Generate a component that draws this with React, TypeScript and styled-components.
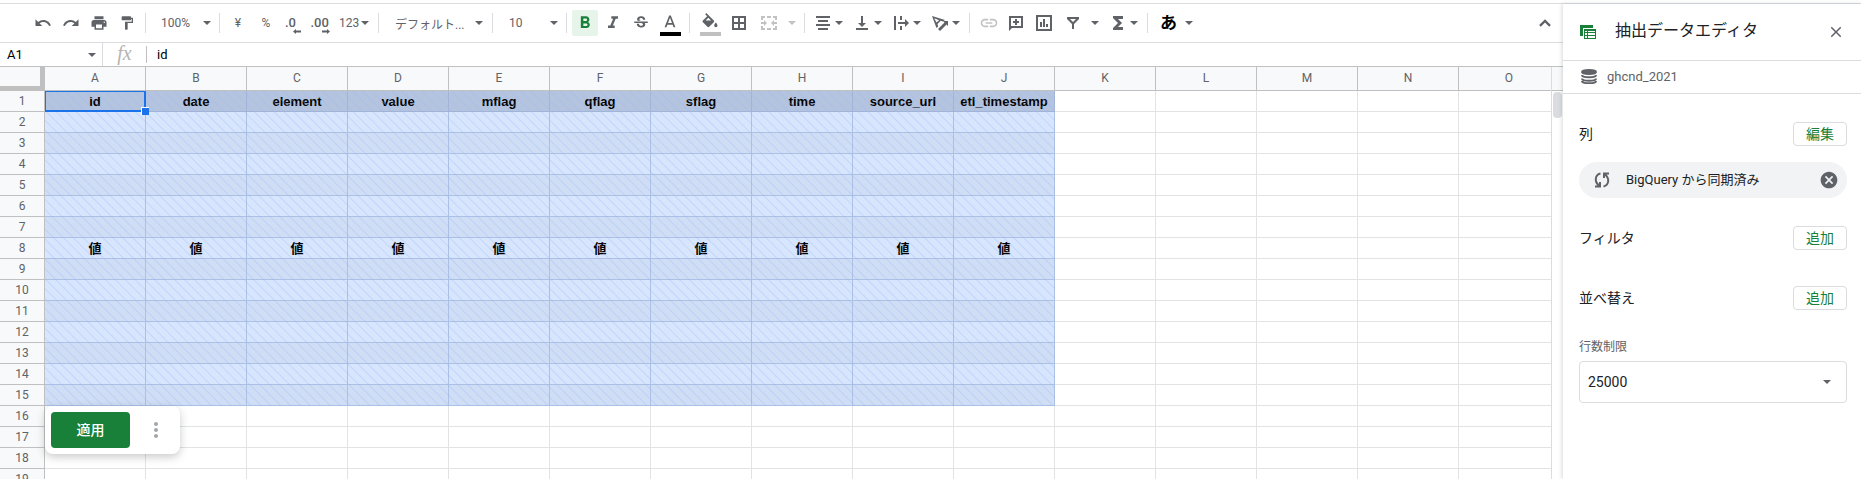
import React from 'react';
import styled, { createGlobalStyle, css } from 'styled-components';

const SANS = `Roboto, 'Noto Sans CJK JP', sans-serif`;
const LINE = '#dadce0';
const GRID = '#e2e3e3';
const HEAD_LINE = '#c0c0c0';
const INK = '#5f6368';
const GREEN = '#188038';

const GlobalStyle = createGlobalStyle`
  *, *::before, *::after { box-sizing: border-box; }
  body { margin: 0; background: #fff; color: #202124; font-family: ${SANS}; font-size: 13px; }
  button, input, select { font-family: inherit; }
`;

const Page = styled.div`
  display: flex;
  flex-direction: column;
  height: 100vh;
  padding-top: 3px;
  overflow: hidden;
`;
const Body = styled.div`
  display: flex;
  flex: 1;
  min-height: 0;
  border-top: 1px solid ${LINE};
`;
const Main = styled.main`
  display: flex;
  flex-direction: column;
  flex: 1;
  min-width: 0;
`;

/* ---------- toolbar ---------- */
const Toolbar = styled.div`
  display: flex;
  align-items: center;
  height: 39px;
  padding: 0 8px 0 29px;
  border-bottom: 1px solid ${LINE};
`;
const IconButton = styled.button<{ $w?: number; $on?: boolean; $dim?: boolean; $ml?: number }>`
  display: flex;
  align-items: center;
  justify-content: center;
  flex: none;
  width: ${p => p.$w ?? 26}px;
  height: 26px;
  margin: 0 0 0 ${p => p.$ml ?? 0}px;
  padding: 0;
  border: 0;
  border-radius: 2px;
  background: ${p => (p.$on ? '#e6f4ea' : 'transparent')};
  color: ${p => (p.$on ? GREEN : p.$dim ? '#c1c2c4' : INK)};
  font-size: 12px;
  svg { display: block; }
`;
const MenuButton = styled(IconButton)`
  justify-content: space-between;
`;
const MoreButton = styled(IconButton)`
  color: #a3a6aa;
`;
const Divider = styled.span<{ $ml?: number; $mr?: number }>`
  flex: none;
  width: 1px;
  height: 20px;
  margin: 0 ${p => p.$mr ?? 6}px 0 ${p => p.$ml ?? 6}px;
  background: ${LINE};
`;
const Spacer = styled.span`
  flex: 1;
`;
const Caret = styled.span`
  flex: none;
  border: 4px solid transparent;
  border-top-color: currentColor;
  border-bottom: 0;
`;

type IconProps = { d: string; size?: number; box?: number };
const Icon = ({ d, size = 18, box = 24 }: IconProps) => (
  <svg width={size} height={size} viewBox={`0 0 ${box} ${box}`} fill="currentColor" fillRule="evenodd" aria-hidden="true">
    <path d={d} />
  </svg>
);

const P = {
  undo: 'M12.5 8c-2.65 0-5.05.99-6.9 2.6L2 7v9h9l-3.62-3.62c1.39-1.16 3.16-1.88 5.12-1.88 3.54 0 6.55 2.31 7.6 5.5l2.37-.78C21.08 11.03 17.15 8 12.5 8z',
  redo: 'M18.4 10.6C16.55 8.99 14.15 8 11.5 8c-4.65 0-8.58 3.03-9.96 7.22L3.9 16c1.05-3.19 4.05-5.5 7.6-5.5 1.95 0 3.73.72 5.12 1.88L13 16h9V7l-3.6 3.6z',
  print: 'M19 8H5c-1.66 0-3 1.34-3 3v6h4v4h12v-4h4v-6c0-1.66-1.34-3-3-3zm-3 11H8v-5h8v5zm3-7c-.55 0-1-.45-1-1s.45-1 1-1 1 .45 1 1-.45 1-1 1zm-1-9H6v4h12V3z',
  paint: 'M18 4V3c0-.55-.45-1-1-1H5c-.55 0-1 .45-1 1v4c0 .55.45 1 1 1h12c.55 0 1-.45 1-1V6h1v4H9v11c0 .55.45 1 1 1h2c.55 0 1-.45 1-1v-9h8V4h-3z',
  bold: 'M15.6 10.79c.97-.67 1.65-1.77 1.65-2.79 0-2.26-1.75-4-4-4H7v14h7.04c2.09 0 3.71-1.7 3.71-3.79 0-1.52-.86-2.82-2.15-3.42zM10 6.5h3c.83 0 1.5.67 1.5 1.5s-.67 1.5-1.5 1.5h-3v-3zm3.5 9H10v-3h3.5c.83 0 1.5.67 1.5 1.5s-.67 1.5-1.5 1.5z',
  italic: 'M10 4v3h2.21l-3.42 8H6v3h8v-3h-2.21l3.42-8H18V4z',
  strike: 'M7.24 8.75c-.26-.48-.39-1.03-.39-1.67 0-.61.13-1.16.4-1.67.26-.5.63-.93 1.11-1.29.48-.35 1.05-.63 1.7-.83.66-.19 1.39-.29 2.18-.29.81 0 1.54.11 2.21.34.66.22 1.23.54 1.69.94.47.4.83.88 1.08 1.43s.38 1.15.38 1.81h-3.01c0-.31-.05-.59-.15-.85-.09-.27-.24-.49-.44-.68-.2-.19-.45-.33-.75-.44-.3-.1-.66-.16-1.06-.16-.39 0-.74.04-1.03.13s-.53.21-.72.36c-.19.16-.34.34-.44.55-.1.21-.15.43-.15.66 0 .48.25.88.74 1.21.38.25.77.48 1.41.7H7.39c-.05-.08-.11-.17-.15-.25zM21 12v-2H3v2h9.62c.18.07.4.14.55.2.37.17.66.34.87.51s.35.36.43.57c.07.2.11.43.11.69 0 .23-.05.45-.14.66-.09.2-.23.38-.42.53-.19.15-.42.26-.71.35-.29.08-.63.13-1.01.13-.43 0-.83-.04-1.18-.13s-.66-.23-.91-.42c-.25-.19-.45-.44-.59-.75s-.25-.76-.25-1.21H6.4c0 .55.08 1.13.24 1.58s.37.85.65 1.21c.28.35.6.66.98.92.37.26.78.48 1.22.65.44.17.9.3 1.38.39.48.08.96.13 1.44.13.8 0 1.53-.09 2.18-.28s1.21-.45 1.67-.79c.46-.34.82-.77 1.07-1.27s.38-1.07.38-1.71c0-.6-.1-1.14-.31-1.61-.05-.11-.11-.23-.17-.33H21V12z',
  textA: 'M11 3L5.5 17h2.25l1.12-3h6.25l1.12 3h2.25L13 3h-2zm-1.38 9L12 5.67 14.38 12H9.62z',
  fill: 'M16.56 8.94L7.62 0 6.21 1.41l2.38 2.38-5.15 5.15c-.59.59-.59 1.54 0 2.12l5.5 5.5c.29.29.68.44 1.06.44s.77-.15 1.06-.44l5.5-5.5c.59-.58.59-1.53 0-2.12zM6.700 9L10 5.700 13.300 9H6.700zM19 11.5s-2 2.17-2 3.5c0 1.1.9 2 2 2s2-.9 2-2c0-1.33-2-3.5-2-3.5z',
  // The icons below are drawn on an 18 unit grid, one unit to a pixel.
  borders: 'M2 2h14v14H2zM4 4v4h4V4zm6 0v4h4V4zm-6 6v4h4v-4zm6 0v4h4v-4z',
  merge: 'M1 2h4v2H3v2H1zM7 2h4v2H7zM13 2h4v4h-2V4h-2zM1 12h2v2h2v2H1zM7 14h4v2H7zM15 12h2v4h-4v-2h2zM1 8h3V6l3 3-3 3v-2H1zM17 8h-3V6l-3 3 3 3v-2h3z',
  center: 'M2 2h14v2H2zM4 6h10v2H4zM2 10h14v2H2zM4 14h10v2H4z',
  bottom: 'M8 2h2v7h3l-4 4-4-4h3zM3 14h12v2H3z',
  overflow: 'M2 2h2v14H2zM8 2h2v4H8zM8 12h2v4H8zM6 8h7V5l4 4-4 4v-3H6z',
  rotate: 'M1 2l13 4-2 1.500-2.300-.7L6.500 10l.7 2.500L5.500 14zM3.200 4.200l2.300 4.400L8.100 6.200zM7 15l6.500-6.500L12 7h5v5l-1.500-1.500L9 17z',
  link: 'M3.900 12c0-1.710 1.390-3.100 3.100-3.100h4V7H7c-2.760 0-5 2.240-5 5s2.240 5 5 5h4v-1.900H7c-1.710 0-3.100-1.390-3.100-3.100zM8 13h8v-2H8v2zm9-6h-4v1.900h4c1.710 0 3.100 1.390 3.100 3.100s-1.390 3.100-3.100 3.100h-4V17h4c2.760 0 5-2.240 5-5s-2.240-5-5-5z',
  comment: 'M2 2h14v12H5l-3 3zM4 4v8h10V4zM8 5h2v2h2v2h-2v2H8V9H6V7h2z',
  chart: 'M1 1h16v16H1zM3 3v12h12V3zM5 8h2v5H5zM8 5h2v8H8zM11 10h2v3h-2z',
  filter: 'M3 3h12v2l-5 5v5H8v-5L3 5zM6 5l3 3 3-3z',
  sigma: 'M4 2h10v3H9l4 4-4 4h5v3H4v-2l5-5-5-5z',
  up: 'M12 7.500l-7 7 1.900 1.900 5.100-5.100 5.100 5.100 1.900-1.900z',
  close: 'M19 6.410L17.590 5 12 10.590 6.410 5 5 6.410 10.590 12 5 17.590 6.410 19 12 13.410 17.590 19 19 17.590 13.410 12z',
  cancel: 'M12 2C6.470 2 2 6.470 2 12s4.470 10 10 10 10-4.470 10-10S17.530 2 12 2zm5 13.590L15.590 17 12 13.410 8.410 17 7 15.590 10.590 12 7 8.410 8.410 7 12 10.590 15.590 7 17 8.410 13.410 12 17 15.590z',
  more: 'M12 8c1.100 0 2-.9 2-2s-.9-2-2-2-2 .9-2 2 .9 2 2 2zm0 2c-1.100 0-2 .9-2 2s.9 2 2 2 2-.9 2-2-.9-2-2-2zm0 6c-1.100 0-2 .9-2 2s.9 2 2 2 2-.9 2-2-.9-2-2-2z',
};

const Swatch = styled.span<{ $c: string }>`
  display: flex;
  flex-direction: column;
  align-items: center;
  padding-top: 3px;
  &::after {
    content: '';
    width: 21px;
    height: 4px;
    margin-top: -1px;
    background: ${p => p.$c};
  }
`;
const Decimal = styled.span<{ $w: number }>`
  display: flex;
  flex-direction: column;
  width: ${p => p.$w}px;
  padding-top: 4px;
  font-size: 13px;
  font-weight: 500;
  line-height: 13px;
  text-align: left;
  svg { align-self: flex-end; }
`;
const Kana = styled.span`
  color: #000;
  font-size: 17px;
  font-weight: 700;
  line-height: 20px;
`;
const DecimalArrow = ({ right }: { right?: boolean }) => (
  <svg width="8" height="5" viewBox="0 0 8 5" fill="currentColor" aria-hidden="true">
    <path d={right ? 'M0 1.500h5V0l3 2.500L5 5V3.500H0z' : 'M8 1.500H3V0L0 2.500 3 5V3.500h5z'} />
  </svg>
);

/* ---------- formula bar ---------- */
const FormulaBar = styled.div`
  display: flex;
  align-items: center;
  height: 24px;
  border-bottom: 1px solid ${HEAD_LINE};
`;
const NameBox = styled.div`
  display: flex;
  align-items: center;
  width: 103px;
  height: 100%;
  padding-right: 6px;
  border-right: 1px solid ${LINE};
  color: ${INK};
`;
const PlainInput = styled.input`
  flex: 1;
  min-width: 0;
  padding: 0 0 0 7px;
  border: 0;
  outline: 0;
  background: transparent;
  color: #000;
  font-size: 13px;
`;
const Fx = styled.span`
  width: 43px;
  padding-bottom: 3px;
  color: #b4b4b4;
  font-family: 'Liberation Serif', serif;
  font-size: 20px;
  font-style: italic;
  line-height: 20px;
  text-align: center;
`;
const FormulaField = styled.label`
  display: flex;
  flex: 1;
  height: 17px;
  padding-left: 3px;
  border-left: 1px solid ${HEAD_LINE};
`;

/* ---------- sheet ---------- */
const SheetRow = styled.div`
  display: flex;
  flex: 1;
  min-height: 0;
`;
const Viewport = styled.div`
  position: relative;
  flex: 1;
  min-width: 0;
  overflow: hidden;
`;
const Table = styled.table`
  width: 1560px;
  table-layout: fixed;
  border-collapse: separate;
  border-spacing: 0;
`;
const Col = styled.col<{ $w: number }>`
  width: ${p => p.$w}px;
`;
const Corner = styled.td`
  height: 24px;
  padding: 0;
  border: solid ${HEAD_LINE};
  border-width: 0 5px 5px 0;
  background: #f8f9fa;
`;
const ColHead = styled.th`
  height: 24px;
  padding: 0;
  border: solid ${HEAD_LINE};
  border-width: 0 1px 1px 0;
  background: #f8f9fa;
  color: ${INK};
  font-size: 12px;
  font-weight: 400;
  line-height: 15px;
`;
const RowHead = styled(ColHead)`
  height: 21px;
`;
type Tone = 'head' | 'light' | 'dark';
const tones: Record<Tone, [string, string]> = {
  head: ['#b4c4df', '#a2b4d6'],
  light: ['#d7e5fd', '#abc0e3'],
  dark: ['#cfdef5', '#abc0e3'],
};
const Cell = styled.td<{ $tone?: Tone }>`
  height: 21px;
  padding: 1px 0 0;
  border: solid ${GRID};
  border-width: 0 1px 1px 0;
  font-family: 'Liberation Sans', 'Noto Sans CJK JP', sans-serif;
  font-size: 13px;
  font-weight: 700;
  line-height: 18px;
  text-align: center;
  white-space: nowrap;
  color: #000;
  ${p => p.$tone && css`
    background: ${tones[p.$tone][0]};
    border-color: ${tones[p.$tone][1]};
  `}
`;
const Hatch = styled.div`
  position: absolute;
  top: 24px;
  left: 45px;
  width: 1010px;
  height: 315px;
  background: repeating-linear-gradient(45deg, transparent 0 5px, rgba(150, 180, 250, 0.32) 6px, transparent 7px);
  pointer-events: none;
`;
const Selection = styled.div`
  position: absolute;
  top: 24px;
  left: 45px;
  width: 101px;
  height: 21px;
  border: 2px solid #1a73e8;
  border-width: 1px 2px 2px 1px;
  &::after {
    content: '';
    position: absolute;
    right: -5px;
    bottom: -5px;
    width: 8px;
    height: 8px;
    border: solid #fff;
    border-width: 1px 0 0 1px;
    background: #1a73e8;
  }
`;
const ApplyCard = styled.div`
  position: absolute;
  top: 339px;
  left: 45px;
  display: flex;
  align-items: center;
  width: 135px;
  height: 48px;
  padding: 0 6px;
  border-radius: 8px;
  background: #fff;
  box-shadow: 0 3px 8px rgba(60, 64, 67, 0.28);
`;
const ApplyButton = styled.button`
  width: 79px;
  height: 36px;
  padding: 0 0 2px;
  border: 0;
  border-radius: 4px;
  background: ${GREEN};
  color: #fff;
  font-size: 14px;
  font-weight: 500;
`;
const Track = styled.div`
  flex: none;
  width: 12px;
  border-left: 1px solid ${LINE};
  background: #fff;
  &::before {
    content: '';
    display: block;
    height: 24px;
    border-bottom: 1px solid ${HEAD_LINE};
    background: #f8f9fa;
  }
  &::after {
    content: '';
    display: block;
    height: 26px;
    margin: 1px 1px 0;
    border-radius: 4px;
    background: ${LINE};
  }
`;

/* ---------- side panel ---------- */
const Panel = styled.aside`
  position: relative;
  flex: none;
  width: 298px;
  background: #fff;
  box-shadow: -1px 0 4px rgba(60, 64, 67, 0.2);
`;
const PanelHeader = styled.header`
  display: flex;
  align-items: center;
  height: 57px;
  padding: 0 16px 0 17px;
  border-bottom: 1px solid ${LINE};
`;
const PanelTitle = styled.h2`
  flex: 1;
  margin: 0;
  padding: 0 0 2px 19px;
  font-size: 16px;
  font-weight: 400;
  line-height: 24px;
`;
const Source = styled.div`
  display: flex;
  align-items: center;
  gap: 10px;
  height: 33px;
  padding: 0 0 2px 18px;
  border-bottom: 1px solid ${LINE};
  color: ${INK};
  font-size: 13px;
`;
const PanelBody = styled.div`
  padding: 28px 14px 0 16px;
`;
const Section = styled.div<{ $mb: number }>`
  display: flex;
  align-items: center;
  justify-content: space-between;
  height: 24px;
  margin-bottom: ${p => p.$mb}px;
  font-size: 14px;
  line-height: 20px;
`;
const SmallButton = styled.button`
  width: 54px;
  height: 24px;
  padding: 0;
  border: 1px solid ${LINE};
  border-radius: 4px;
  background: #fff;
  color: ${GREEN};
  font-size: 14px;
  line-height: 20px;
`;
const Chip = styled.div`
  display: flex;
  align-items: center;
  height: 36px;
  margin-bottom: 28px;
  padding: 0 8px 0 14px;
  border-radius: 18px;
  background: #f1f3f4;
  color: ${INK};
`;
const ChipText = styled.span`
  flex: 1;
  padding: 0 0 3px 15px;
  color: #202124;
  font-size: 13px;
`;
const LimitLabel = styled.label`
  display: block;
  margin-bottom: 4px;
  color: ${INK};
  font-size: 12px;
  line-height: 20px;
`;
const SelectBox = styled.div`
  display: flex;
  align-items: center;
  height: 42px;
  padding-right: 15px;
  border: 1px solid ${LINE};
  border-radius: 4px;
  color: ${INK};
`;
const Select = styled.select`
  flex: 1;
  height: 100%;
  padding: 0 8px;
  border: 0;
  appearance: none;
  background: transparent;
  color: #202124;
  font-size: 14px;
`;

const columns = 'ABCDEFGHIJKLMNO'.split('');
const fields = ['id', 'date', 'element', 'value', 'mflag', 'qflag', 'sflag', 'time', 'source_url', 'etl_timestamp'];
const rows = Array.from({ length: 19 }, (_, i) => i + 1);

const toneOf = (row: number, col: number): Tone | undefined => {
  if (col >= fields.length || row > 15) return undefined;
  if (row === 1) return 'head';
  return row % 2 ? 'dark' : 'light';
};
const textOf = (row: number, col: number) => {
  if (col >= fields.length) return '';
  return row === 1 ? fields[col] : row === 8 ? '値' : '';
};

export default function App() {
  return (
    <Page>
      <GlobalStyle />
      <Body>
        <Main>
          <Toolbar role="toolbar" aria-label="ツールバー">
            <IconButton $w={28} aria-label="元に戻す"><Icon d={P.undo} /></IconButton>
            <IconButton $w={28} aria-label="やり直し"><Icon d={P.redo} /></IconButton>
            <IconButton $w={28} aria-label="印刷"><Icon d={P.print} /></IconButton>
            <IconButton $w={28} aria-label="書式を貼り付け"><Icon d={P.paint} size={16} /></IconButton>
            <Divider $ml={4} $mr={15} />
            <MenuButton $w={50}>100%<Caret /></MenuButton>
            <Divider $ml={8} />
            <IconButton $w={24}>¥</IconButton>
            <IconButton $w={32}>%</IconButton>
            <IconButton $w={22} aria-label="小数点以下の桁数を減らす"><Decimal $w={16}>.0<DecimalArrow /></Decimal></IconButton>
            <IconButton $w={30} $ml={1} aria-label="小数点以下の桁数を増やす"><Decimal $w={19}>.00<DecimalArrow right /></Decimal></IconButton>
            <MenuButton $w={30} $ml={4}>123<Caret /></MenuButton>
            <Divider $ml={9} $mr={16} />
            <MenuButton $w={88}>デフォルト...<Caret /></MenuButton>
            <Divider $ml={9} $mr={16} />
            <MenuButton $w={49}>10<Caret /></MenuButton>
            <Divider $ml={8} $mr={5} />
            <IconButton $on aria-label="太字"><Icon d={P.bold} size={20} /></IconButton>
            <IconButton $w={28} $ml={1} aria-label="斜体"><Icon d={P.italic} size={20} /></IconButton>
            <IconButton $w={28} aria-label="取り消し線"><Icon d={P.strike} /></IconButton>
            <IconButton $w={30} aria-label="テキストの色"><Swatch $c="#000"><Icon d={P.textA} size={20} /></Swatch></IconButton>
            <Divider $ml={4} />
            <IconButton $w={28} aria-label="塗りつぶしの色"><Swatch $c="#c0c0c0"><Icon d={P.fill} size={20} /></Swatch></IconButton>
            <IconButton $w={30} aria-label="枠線"><Icon d={P.borders} box={18} /></IconButton>
            <IconButton $w={30} $dim aria-label="セルを結合"><Icon d={P.merge} box={18} /></IconButton>
            <IconButton $w={12} $dim $ml={2} aria-label="結合の種類"><Caret /></IconButton>
            <Divider $ml={6} $mr={9} />
            <MenuButton $w={29} aria-label="水平方向の配置"><Icon d={P.center} box={18} /><Caret /></MenuButton>
            <MenuButton $w={29} $ml={10} aria-label="垂直方向の配置"><Icon d={P.bottom} box={18} /><Caret /></MenuButton>
            <MenuButton $w={29} $ml={10} aria-label="テキストの折り返し"><Icon d={P.overflow} box={18} /><Caret /></MenuButton>
            <MenuButton $w={29} $ml={10} aria-label="テキストの回転"><Icon d={P.rotate} box={18} /><Caret /></MenuButton>
            <Divider $ml={9} />
            <IconButton $w={26} $dim aria-label="リンクを挿入"><Icon d={P.link} size={20} /></IconButton>
            <IconButton $w={28} aria-label="コメントを挿入"><Icon d={P.comment} box={18} /></IconButton>
            <IconButton $w={28} aria-label="グラフを挿入"><Icon d={P.chart} box={18} /></IconButton>
            <MenuButton $w={35} $ml={6} aria-label="フィルタを作成"><Icon d={P.filter} box={18} /><Caret /></MenuButton>
            <MenuButton $w={29} $ml={10} aria-label="関数"><Icon d={P.sigma} box={18} /><Caret /></MenuButton>
            <Divider $ml={9} $mr={12} />
            <MenuButton $w={33} aria-label="入力ツール"><Kana>あ</Kana><Caret /></MenuButton>
            <Spacer />
            <IconButton $w={20} aria-label="メニューを非表示"><Icon d={P.up} size={20} /></IconButton>
          </Toolbar>

          <FormulaBar>
            <NameBox>
              <PlainInput aria-label="名前ボックス" defaultValue="A1" />
              <Caret />
            </NameBox>
            <Fx>fx</Fx>
            <FormulaField>
              <PlainInput aria-label="数式" defaultValue="id" />
            </FormulaField>
          </FormulaBar>

          <SheetRow>
            <Viewport>
              <Table>
                <colgroup>
                  <Col $w={45} />
                  {columns.map(c => <Col key={c} $w={101} />)}
                </colgroup>
                <thead>
                  <tr>
                    <Corner />
                    {columns.map(c => <ColHead key={c} scope="col">{c}</ColHead>)}
                  </tr>
                </thead>
                <tbody>
                  {rows.map(r => (
                    <tr key={r}>
                      <RowHead scope="row">{r}</RowHead>
                      {columns.map((c, i) => <Cell key={c} $tone={toneOf(r, i)}>{textOf(r, i)}</Cell>)}
                    </tr>
                  ))}
                </tbody>
              </Table>
              <Hatch />
              <Selection />
              <ApplyCard>
                <ApplyButton>適用</ApplyButton>
                <MoreButton $w={26} $ml={13} aria-label="その他"><Icon d={P.more} size={24} /></MoreButton>
              </ApplyCard>
            </Viewport>
            <Track />
          </SheetRow>
        </Main>

        <Panel>
          <PanelHeader>
            <svg width="16" height="14" viewBox="0 0 16 14" aria-hidden="true">
              <path fill={GREEN} fillRule="evenodd" d="M0 0h13v3H3v8H0zM4 4h12v10H4zM5 6v1h2V6zm3 0v1h7V6zM5 8v2h2V8zm3 0v2h7V8zm-3 3v2h2v-2zm3 0v2h7v-2z" />
            </svg>
            <PanelTitle>抽出データエディタ</PanelTitle>
            <IconButton $w={18} aria-label="閉じる"><Icon d={P.close} /></IconButton>
          </PanelHeader>
          <Source>
            <svg width="16" height="15" viewBox="0 0 16 15" fill="none" stroke={INK} strokeWidth="2" aria-hidden="true">
              <ellipse cx="8" cy="3" rx="7" ry="2" fill={INK} />
              <path d="M1 6c0 3 14 3 14 0M1 9.500c0 3 14 3 14 0M1 12c0 3 14 3 14 0" />
            </svg>
            ghcnd_2021
          </Source>
          <PanelBody>
            <Section $mb={16}>列<SmallButton>編集</SmallButton></Section>
            <Chip>
              <svg width="18" height="18" viewBox="0 0 18 18" fill="none" stroke={INK} strokeWidth="2" aria-hidden="true">
                <path d="M7.500 2.500C1.500 4 1.500 11 6 14.500M2 15.500h5V11M10.500 15.500c6-1.500 6-8.500 1.500-12M16 2.500h-5V7" />
              </svg>
              <ChipText>BigQuery から同期済み</ChipText>
              <IconButton $w={20} aria-label="削除"><Icon d={P.cancel} size={20} /></IconButton>
            </Chip>
            <Section $mb={36}>フィルタ<SmallButton>追加</SmallButton></Section>
            <Section $mb={27}>並べ替え<SmallButton>追加</SmallButton></Section>
            <LimitLabel htmlFor="row-limit">行数制限</LimitLabel>
            <SelectBox>
              <Select id="row-limit" defaultValue="25000">
                <option>25000</option>
              </Select>
              <Caret />
            </SelectBox>
          </PanelBody>
        </Panel>
      </Body>
    </Page>
  );
}
